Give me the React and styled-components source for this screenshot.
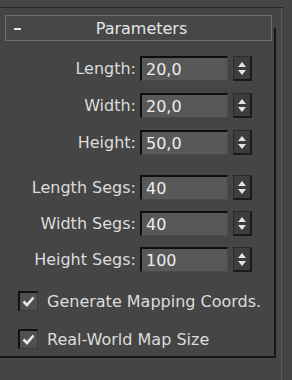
import styled, { createGlobalStyle } from 'styled-components';

const GlobalStyle = createGlobalStyle`
  html, body {
    margin: 0;
    padding: 0;
    background: #454545;
  }
  body {
    font-family: "DejaVu Sans", "Liberation Sans", sans-serif;
  }
`;

const Screen = styled.div`
  width: 292px;
  height: 380px;
  background: #454545;
  overflow: hidden;
`;

const TopLine = styled.div`
  margin-top: 7px;
  width: 283px;
  height: 1px;
  background: #232323;
`;

const Columns = styled.div`
  display: flex;
`;

const Gutter = styled.div`
  width: 5px;
  margin-left: 5px;
  border-left: 1px solid #5a5a5a;
  height: 372px;
`;

const Rollout = styled.div`
  width: 274px;
  margin-top: 20px;
  height: 328px;
  border-right: 2px solid #161616;
  border-bottom: 2px solid #161616;
`;

const Header = styled.div`
  margin: -13px 0 0 5px;
  width: 265px;
  height: 24px;
  border: 1px solid #6c6c6c;
  background: #474747;
  display: flex;
  align-items: center;
  position: relative;
  color: #e4e4e4;
  font-size: 16px;
`;

const Minus = styled.span`
  position: absolute;
  left: 8px;
  top: 12px;
  width: 7px;
  height: 2px;
  background: #eaeaea;
`;

const Title = styled.span`
  flex: 1;
  text-align: center;
  margin-left: 6px;
`;

const Body = styled.div`
  padding-top: 15px;
  display: flex;
  flex-direction: column;
`;

const Group = styled.div`
  display: grid;
  grid-template-columns: 136px 88px 20px;
  column-gap: 4px;
  row-gap: ${(p) => p.$row}px;
  align-items: center;
  margin-bottom: ${(p) => p.$gap || 0}px;
`;

const Label = styled.label`
  text-align: right;
  color: #dcdcdc;
  font-size: 16px;
  white-space: nowrap;
`;

const Field = styled.div`
  height: 25px;
  box-sizing: border-box;
  background: #585858;
  border-top: 2px solid #0e0e0e;
  border-left: 2px solid #0e0e0e;
  border-right: 1px solid #4a4a4a;
  border-bottom: 1px solid #4a4a4a;
  color: #ececec;
  font-size: 16px;
  display: flex;
  align-items: center;
  padding-left: 4px;
`;

const Spinner = styled.div`
  margin-left: 1px;
  width: 19px;
  height: 25px;
  box-sizing: border-box;
  background: #3d3d3d;
  border: 1px solid #2a2a2a;
  border-bottom: 2px solid #1a1a1a;
  border-right: 2px solid #1a1a1a;
  display: flex;
  flex-direction: column;
  align-items: center;
  justify-content: center;
  gap: 3px;
`;

const Arrow = styled.span`
  width: 0;
  height: 0;
  border-left: 4px solid transparent;
  border-right: 4px solid transparent;
  ${(p) =>
    p.$down
      ? 'border-top: 5px solid #e4e4e4;'
      : 'border-bottom: 5px solid #e4e4e4;'}
`;

const Checks = styled.div`
  display: flex;
  flex-direction: column;
  gap: 18px;
  padding-left: 18px;
`;

const CheckRow = styled.div`
  display: flex;
  align-items: center;
  gap: 9px;
  color: #dcdcdc;
  font-size: 16px;
`;

const Box = styled.span`
  width: 20px;
  height: 20px;
  box-sizing: border-box;
  background: #505050;
  border-top: 2px solid #111;
  border-left: 2px solid #111;
  border-right: 1px solid #3a3a3a;
  border-bottom: 1px solid #3a3a3a;
  display: flex;
  align-items: center;
  justify-content: center;
`;

const Check = () => (
  <svg width="13" height="11" viewBox="0 0 13 11">
    <path d="M1.5 5.5 L5 9 L11.5 1.5" fill="none" stroke="#e6e6e6" strokeWidth="2.6" />
  </svg>
);

const Spin = () => (
  <Spinner>
    <Arrow />
    <Arrow $down />
  </Spinner>
);

const dims = [
  ['Length:', '20,0'],
  ['Width:', '20,0'],
  ['Height:', '50,0'],
];

const segs = [
  ['Length Segs:', '40'],
  ['Width Segs:', '40'],
  ['Height Segs:', '100'],
];

const Rows = ({ items }) =>
  items.map(([label, value]) => [
    <Label key={label + 'l'}>{label}</Label>,
    <Field key={label + 'f'}>{value}</Field>,
    <Spin key={label + 's'} />,
  ]);

export default function App() {
  return (
    <Screen>
      <GlobalStyle />
      <TopLine />
      <Columns>
        <Rollout>
          <Header>
            <Minus />
            <Title>Parameters</Title>
          </Header>
          <Body>
            <Group $row={12} $gap={20}>
              <Rows items={dims} />
            </Group>
            <Group $row={11} $gap={19}>
              <Rows items={segs} />
            </Group>
            <Checks>
              <CheckRow>
                <Box><Check /></Box>
                Generate Mapping Coords.
              </CheckRow>
              <CheckRow>
                <Box><Check /></Box>
                Real-World Map Size
              </CheckRow>
            </Checks>
          </Body>
        </Rollout>
        <Gutter />
      </Columns>
    </Screen>
  );
}
